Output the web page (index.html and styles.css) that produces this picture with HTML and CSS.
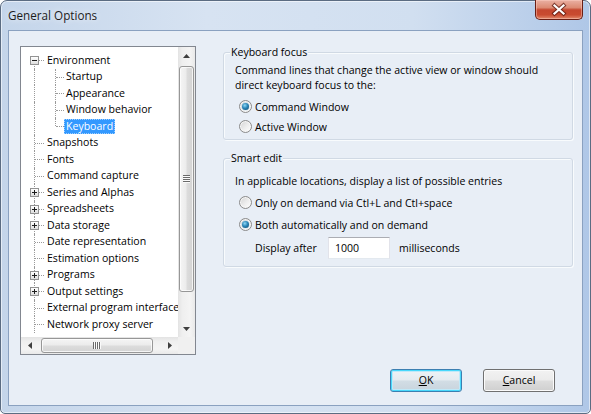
FILE: index.html
```html
<!DOCTYPE html>
<html>
<head>
<meta charset="utf-8">
<title>General Options</title>
<link rel="stylesheet" href="styles.css">
</head>
<body>
<div class="window">
  <div class="titlebar">
    <span class="title">General Options</span>
    <div class="close">
      <svg width="46" height="19" viewBox="0 0 46 19">
        <path d="M18.5 5.5 L27.5 13.5 M27.5 5.5 L18.5 13.5" stroke="#5b1a10" stroke-width="4.2" stroke-linecap="square" fill="none" opacity="0.75"/>
        <path d="M18.5 5.5 L27.5 13.5 M27.5 5.5 L18.5 13.5" stroke="#ffffff" stroke-width="2.2" stroke-linecap="square" fill="none"/>
      </svg>
    </div>
  </div>
  <div class="client">
    <div class="main">
      <div class="tree">
        <div class="tree-list">
          <div class="row first"><span class="cell c0"><span class="box minus"></span></span><span class="label">Environment</span></div>
          <div class="row"><span class="cell c1"></span><span class="cell c2"></span><span class="label">Startup</span></div>
          <div class="row"><span class="cell c1"></span><span class="cell c2"></span><span class="label">Appearance</span></div>
          <div class="row"><span class="cell c1"></span><span class="cell c2"></span><span class="label">Window behavior</span></div>
          <div class="row last"><span class="cell c1"></span><span class="cell c2"></span><span class="label sel">Keyboard</span></div>
          <div class="row"><span class="cell c0"></span><span class="label">Snapshots</span></div>
          <div class="row"><span class="cell c0"></span><span class="label">Fonts</span></div>
          <div class="row"><span class="cell c0"></span><span class="label">Command capture</span></div>
          <div class="row"><span class="cell c0"><span class="box plus"></span></span><span class="label">Series and Alphas</span></div>
          <div class="row"><span class="cell c0"><span class="box plus"></span></span><span class="label">Spreadsheets</span></div>
          <div class="row"><span class="cell c0"><span class="box plus"></span></span><span class="label">Data storage</span></div>
          <div class="row"><span class="cell c0"></span><span class="label">Date representation</span></div>
          <div class="row"><span class="cell c0"></span><span class="label">Estimation options</span></div>
          <div class="row"><span class="cell c0"><span class="box plus"></span></span><span class="label">Programs</span></div>
          <div class="row"><span class="cell c0"><span class="box plus"></span></span><span class="label">Output settings</span></div>
          <div class="row"><span class="cell c0"></span><span class="label">External program interface</span></div>
          <div class="row"><span class="cell c0"></span><span class="label">Network proxy server</span></div>
        </div>
        <div class="vscroll">
          <div class="arrow"><svg width="7" height="4" viewBox="0 0 7 4"><polygon points="3.5,0 7,4 0,4" fill="#3f3f3f"/></svg></div>
          <div class="vtrack"><div class="vthumb"><span class="grip-v"></span></div></div>
          <div class="arrow"><svg width="7" height="4" viewBox="0 0 7 4"><polygon points="0,0 7,0 3.5,4" fill="#3f3f3f"/></svg></div>
        </div>
        <div class="hscroll">
          <div class="harrow"><svg width="4" height="7" viewBox="0 0 4 7"><polygon points="4,0 4,7 0,3.5" fill="#3f3f3f"/></svg></div>
          <div class="htrack"><div class="hthumb"><span class="grip-h"></span></div></div>
          <div class="harrow"><svg width="4" height="7" viewBox="0 0 4 7"><polygon points="0,0 4,3.5 0,7" fill="#3f3f3f"/></svg></div>
        </div>
        <div class="corner"></div>
      </div>
      <div class="panel">
        <div class="group g1">
          <div class="gtitle">Keyboard focus</div>
          <div class="desc">Command lines that change the active view or window should<br>direct keyboard focus to the:</div>
          <div class="radio-row r-first"><span class="radio on"><span class="dot"></span></span><span>Command Window</span></div>
          <div class="radio-row"><span class="radio"></span><span>Active Window</span></div>
        </div>
        <div class="group g2">
          <div class="gtitle">Smart edit</div>
          <div class="desc desc2">In applicable locations, display a list of possible entries</div>
          <div class="radio-row r-wide"><span class="radio"></span><span>Only on demand via Ctl+L and Ctl+space</span></div>
          <div class="radio-row r-wide"><span class="radio on"><span class="dot"></span></span><span>Both automatically and on demand</span></div>
          <div class="display-row">
            <span class="dlabel">Display after</span>
            <span class="input">1000</span>
            <span class="ms">milliseconds</span>
          </div>
        </div>
      </div>
    </div>
    <div class="buttons">
      <button class="btn default"><u>O</u>K</button>
      <button class="btn"><u>C</u>ancel</button>
    </div>
  </div>
</div>
</body>
</html>
```

FILE: styles.css
```css
* { box-sizing: border-box; }
html, body { margin: 0; padding: 0; }
body {
  width: 591px;
  height: 414px;
  overflow: hidden;
  background: #ffffff;
  font-family: "Open Sans", "Noto Sans", sans-serif;
  font-size: 10.55px;
  color: #000;
}

.window {
  width: 591px;
  height: 414px;
  border: 1px solid #5b6c82;
  border-radius: 7px 7px 5px 5px;
  background: linear-gradient(to right, #c4d5ea 0%, #d7e3f2 35%, #d1dff0 70%, #afc7e7 100%);
  box-shadow: inset 0 0 0 1px rgba(255, 255, 255, 0.55);
  display: flex;
  flex-direction: column;
}

.titlebar {
  height: 29px;
  flex: none;
  display: flex;
  justify-content: space-between;
  align-items: flex-start;
  padding: 0 7px;
}
.title {
  font-size: 11.7px;
  line-height: 28px;
  color: #1c1c1c;
  text-shadow: 0 0 6px rgba(255, 255, 255, 0.95);
}
.close {
  width: 48px;
  height: 20px;
  margin-top: -1px;
  border: 1px solid #6a1e14;
  border-top: none;
  border-radius: 0 0 5px 5px;
  background: linear-gradient(#eab0a3 0%, #dc8a73 40%, #c5472f 52%, #c94b30 78%, #e2896b 100%);
  box-shadow: inset 0 0 0 1px rgba(255, 210, 200, 0.45);
  display: flex;
  align-items: center;
  justify-content: center;
}
.close svg { display: block; }

.client {
  flex: 1;
  margin: 0 7px 7px;
  border: 1px solid #8aa1c0;
  background: #e8eef6;
  display: flex;
  flex-direction: column;
  padding: 15px 9px 13px 11px;
}

.main {
  display: flex;
  align-items: flex-start;
  gap: 27px;
}

/* tree */
.tree {
  width: 176px;
  height: 309px;
  flex: none;
  border: 1px solid #828790;
  background: #ffffff;
  display: grid;
  grid-template-columns: 1fr 17px;
  grid-template-rows: 1fr 17px;
}
.tree-list {
  grid-column: 1;
  grid-row: 1;
  min-height: 0;
  min-width: 0;
  overflow: hidden;
  padding-top: 5px;
}
.row {
  height: 16.5px;
  display: flex;
  align-items: center;
  white-space: nowrap;
}
.cell {
  position: relative;
  align-self: stretch;
  flex: none;
}
.c0 { width: 24px; }
.c1 { width: 19px; }
.c2 { width: 24px; }
.c0::before, .c1::before, .c2::before {
  content: "";
  position: absolute;
  top: 0;
  bottom: 0;
  border-left: 1px dotted #9a9a9a;
}
.c0::before, .c1::before { left: 13px; }
.c2::before { left: 15px; }
.first .c0::before { top: 50%; }
.last .c2::before { bottom: 50%; }
.c0::after, .c2::after {
  content: "";
  position: absolute;
  top: 50%;
  border-top: 1px dotted #9a9a9a;
}
.c0::after { left: 14px; width: 9px; }
.c2::after { left: 16px; width: 8px; }

.box {
  position: absolute;
  left: 9px;
  top: calc(50% - 4px);
  width: 9px;
  height: 9px;
  border: 1px solid #939393;
  background: linear-gradient(#ffffff, #dedede);
  z-index: 1;
}
.box::before {
  content: "";
  position: absolute;
  left: 1px;
  top: 3px;
  width: 5px;
  height: 1px;
  background: #1d1d1d;
}
.plus::after {
  content: "";
  position: absolute;
  left: 3px;
  top: 1px;
  width: 1px;
  height: 5px;
  background: #1d1d1d;
}
.label {
  padding: 0 2px;
  line-height: 15px;
}
.sel {
  background: #3399ff;
  color: #ffffff;
  outline: 1px dotted #9fcfff;
  outline-offset: -1px;
}

/* scrollbars */
.vscroll {
  grid-column: 2;
  grid-row: 1;
  display: flex;
  flex-direction: column;
  background: linear-gradient(to right, #e3e3e3, #efefef 25%, #f4f4f4 70%, #e9e9e9);
}
.arrow {
  height: 17px;
  flex: none;
  display: flex;
  align-items: center;
  justify-content: center;
}
.arrow svg, .harrow svg { display: block; }
.vtrack {
  flex: 1;
  padding-top: 2px;
  display: flex;
  flex-direction: column;
  align-items: center;
}
.vthumb {
  width: 15px;
  height: 226px;
  border: 1px solid #979797;
  border-radius: 3px;
  background: linear-gradient(to right, #f5f5f5, #ececec 45%, #dcdcdc 55%, #d3d3d3);
  box-shadow: inset 0 0 0 1px rgba(255, 255, 255, 0.75);
  display: flex;
  align-items: center;
  justify-content: center;
}
.grip-v {
  width: 7px;
  height: 8px;
  background: repeating-linear-gradient(to bottom, #6a6a6a 0 1px, #fafafa 1px 2px);
}
.hscroll {
  grid-column: 1;
  grid-row: 2;
  display: flex;
  background: linear-gradient(to bottom, #e3e3e3, #efefef 25%, #f4f4f4 70%, #e9e9e9);
}
.harrow {
  width: 17px;
  flex: none;
  display: flex;
  align-items: center;
  justify-content: center;
}
.htrack {
  flex: 1;
  padding-left: 3px;
  display: flex;
  align-items: center;
}
.hthumb {
  width: 112px;
  height: 15px;
  border: 1px solid #979797;
  border-radius: 3px;
  background: linear-gradient(to bottom, #f5f5f5, #ececec 45%, #dcdcdc 55%, #d3d3d3);
  box-shadow: inset 0 0 0 1px rgba(255, 255, 255, 0.75);
  display: flex;
  align-items: center;
  justify-content: center;
}
.grip-h {
  width: 8px;
  height: 7px;
  background: repeating-linear-gradient(to right, #6a6a6a 0 1px, #fafafa 1px 2px);
}
.corner {
  grid-column: 2;
  grid-row: 2;
  background: #f0f0f0;
}

/* right panel */
.panel {
  width: 350px;
  flex: none;
  margin-top: 6px;
  display: flex;
  flex-direction: column;
  gap: 18px;
}
.group {
  border: 1px solid #d0d9e4;
  border-radius: 3px;
  box-shadow: inset 1px 1px 0 #f8fbfd, 1px 1px 0 #f8fbfd;
  padding: 0 8px 4px 11px;
  display: flex;
  flex-direction: column;
}
.g2 { padding-bottom: 7px; }
.gtitle {
  align-self: flex-start;
  margin: -9px 0 0 -5px;
  padding: 0 1px;
  line-height: 16px;
  background: #e8eef6;
}
.desc {
  margin-top: 3px;
  line-height: 15px;
}
.desc2 { margin-top: 8px; }
.radio-row {
  display: flex;
  align-items: center;
  height: 17px;
  margin-top: 3px;
  padding-left: 4px;
  gap: 3px;
}
.r-first { margin-top: 5px; }
.r-wide { margin-top: 5px; }
.radio {
  width: 13px;
  height: 13px;
  flex: none;
  border-radius: 50%;
  border: 1px solid #8b8b8b;
  background: linear-gradient(135deg, #d2d2d2 0%, #ececec 50%, #ffffff 100%);
  box-shadow: inset 0 0 0 1px #f6f6f6;
  display: flex;
  align-items: center;
  justify-content: center;
}
.dot {
  width: 7px;
  height: 7px;
  border-radius: 50%;
  background: radial-gradient(circle at 40% 35%, #8fd8f5 0%, #2a86b8 45%, #0c4467 100%);
  box-shadow: 0 0 1px #5aa9d4;
}
.display-row {
  display: flex;
  align-items: center;
  height: 22px;
  margin-top: 4px;
  padding-left: 20px;
}
.dlabel { width: 73px; flex: none; }
.input {
  width: 62px;
  height: 22px;
  flex: none;
  background: #ffffff;
  border: 1px solid;
  border-color: #abadb3 #e2e3ea #e3e9ef #e2e3ea;
  padding-left: 6px;
  line-height: 20px;
}
.ms { margin-left: 9px; }

/* buttons */
.buttons {
  margin-top: auto;
  display: flex;
  justify-content: flex-end;
  gap: 21px;
  padding-right: 18px;
}
.btn {
  width: 72px;
  height: 23px;
  padding: 0;
  font-family: inherit;
  font-size: inherit;
  color: #000;
  line-height: 21px;
  border: 1px solid #707070;
  border-radius: 3px;
  background: linear-gradient(#f2f2f2 0%, #ebebeb 48%, #dddddd 52%, #cfcfcf 100%);
  box-shadow: inset 0 0 0 1px #fbfbfb;
}
.btn.default {
  border-color: #3c7fb1;
  background: linear-gradient(#eef3f6 0%, #e4ebf0 48%, #d2dde5 52%, #c8d4dd 100%);
  box-shadow: inset 0 0 0 1px #48d8fb, inset 0 0 0 2px #bfe9f9;
}
```
